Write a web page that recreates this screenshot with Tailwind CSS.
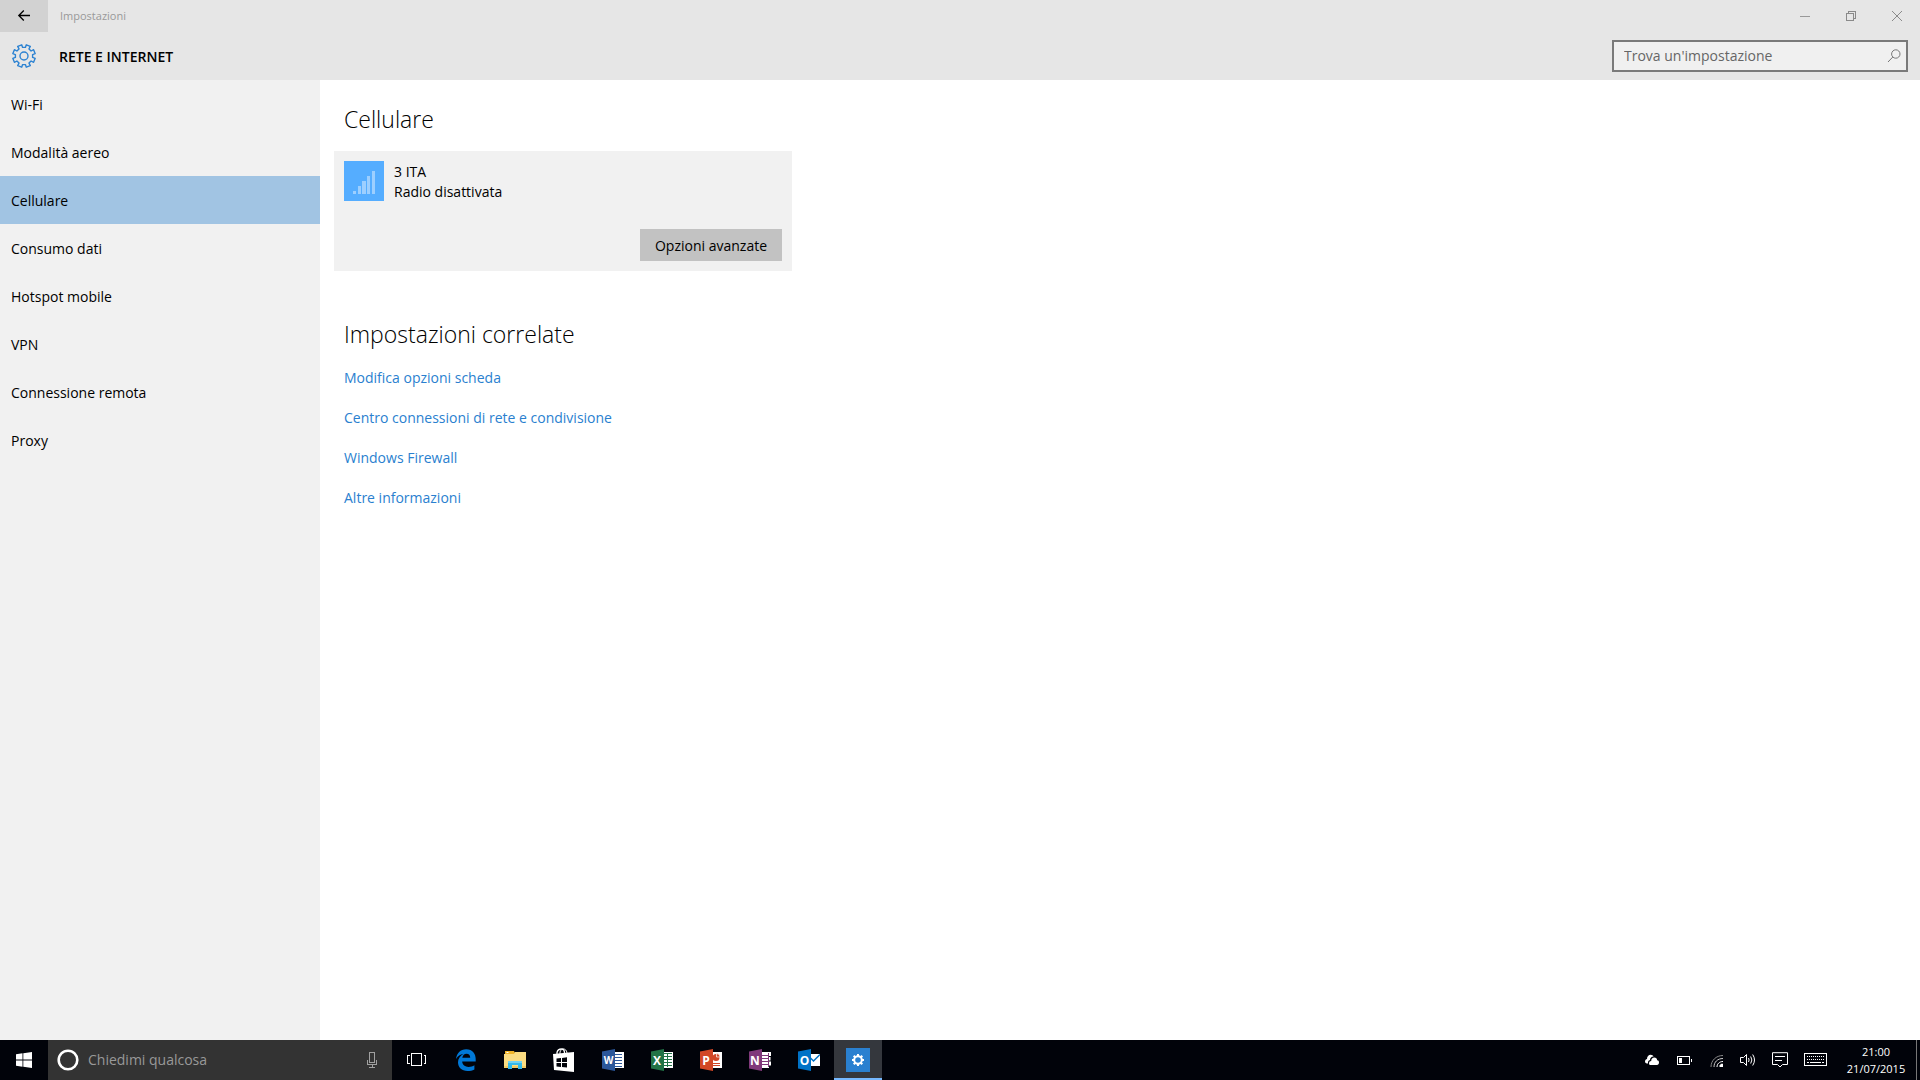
<!DOCTYPE html>
<html lang="it">
<head>
  <meta charset="UTF-8">
  <meta name="viewport" content="width=device-width, initial-scale=1.0">
  <title>Impostazioni - Rete e Internet</title>
  <script src="https://cdn.jsdelivr.net/npm/@tailwindcss/browser@4"></script>
</head>
<body class="h-screen flex flex-col overflow-hidden bg-white text-black text-sm leading-5 font-['Segoe_UI','Open_Sans','Noto_Sans',sans-serif]">

  <!-- Barra del titolo -->
  <header class="bg-[#e6e6e6] shrink-0">
    <div class="flex h-8">
      <button aria-label="Indietro" class="w-12 flex items-center justify-center bg-[#d2d2d2]">
        <svg class="w-4 h-4" viewBox="0 0 16 16" fill="none" stroke="#000" stroke-width="1.3"><path d="M14 7.5H3M7.8 2.5L2.8 7.5L7.8 12.5"/></svg>
      </button>
      <div class="pl-3 flex-1 flex items-center text-[11px] text-[#999]">Impostazioni</div>
      <button aria-label="Riduci a icona" class="w-[46px] flex items-center justify-center">
        <svg class="w-3 h-3" viewBox="0 0 12 12" shape-rendering="crispEdges"><path d="M1 6h10v1H1z" fill="#999"/></svg>
      </button>
      <button aria-label="Ripristina" class="w-[46px] flex items-center justify-center">
        <svg class="w-3 h-3" viewBox="0 0 12 12" fill="none" stroke="#8a8a8a" shape-rendering="crispEdges"><path d="M1.5 3.5h7v7h-7zM3.5 3.5v-2h7v7h-2"/></svg>
      </button>
      <button aria-label="Chiudi" class="w-[46px] flex items-center justify-center">
        <svg class="w-3 h-3" viewBox="0 0 12 12" fill="none" stroke="#8a8a8a"><path d="M1 1l10 10M11 1L1 11"/></svg>
      </button>
    </div>
    <div class="flex items-center h-12 pr-3">
      <div class="w-12 flex justify-center">
        <svg class="w-6 h-6" viewBox="-12 -12 24 24" fill="none" stroke="#2d83d2" stroke-width="1.4" stroke-linejoin="round">
          <path d="M-1.4-8.6L-2.3-11.2L-6.3-9.6L-5-7.1L-7.1-5L-9.6-6.3L-11.2-2.3L-8.6-1.4V1.4L-11.2 2.3L-9.6 6.3L-7.1 5L-5 7.1L-6.3 9.6L-2.3 11.2L-1.4 8.6H1.4L2.3 11.2L6.3 9.6L5 7.1L7.1 5L9.6 6.3L11.2 2.3L8.6 1.4V-1.4L11.2-2.3L9.6-6.3L7.1-5L5-7.1L6.3-9.6L2.3-11.2L1.4-8.6Z"/>
          <circle r="4"/>
        </svg>
      </div>
      <h1 class="flex-1 pl-[11px] pt-px font-semibold">RETE E INTERNET</h1>
      <label class="flex items-center w-[296px] h-8 border-2 border-[#7a7a7a] bg-[#f0f0f0] pl-[10px] pr-1">
        <input type="text" aria-label="Trova un'impostazione" placeholder="Trova un'impostazione" class="flex-1 min-w-0 bg-transparent outline-none placeholder:text-[#666]">
        <svg class="w-4 h-4" viewBox="0 0 16 16" fill="none" stroke="#777"><circle cx="9.800" cy="6" r="4.200"/><path d="M6.800 9L2 14"/></svg>
      </label>
    </div>
  </header>

  <div class="flex flex-1 min-h-0">
    <!-- Menu laterale -->
    <nav class="w-80 shrink-0 bg-[#f1f1f1]">
      <a href="#" class="flex items-center h-12 px-[11px] pt-[2px]">Wi-Fi</a>
      <a href="#" class="flex items-center h-12 px-[11px] pt-[2px]">Modalità aereo</a>
      <a href="#" class="flex items-center h-12 px-[11px] pt-[2px] bg-[#a1c4e3]">Cellulare</a>
      <a href="#" class="flex items-center h-12 px-[11px] pt-[2px]">Consumo dati</a>
      <a href="#" class="flex items-center h-12 px-[11px] pt-[2px]">Hotspot mobile</a>
      <a href="#" class="flex items-center h-12 px-[11px] pt-[2px]">VPN</a>
      <a href="#" class="flex items-center h-12 px-[11px] pt-[2px]">Connessione remota</a>
      <a href="#" class="flex items-center h-12 px-[11px] pt-[2px]">Proxy</a>
    </nav>

    <main class="flex-1 px-[14px] pt-[23px]">
      <h2 class="pl-[10px] text-[23px] leading-8 font-light">Cellulare</h2>
      <section class="mt-4 w-[458px] p-[10px] bg-[#f1f1f1]">
        <div class="flex gap-[10px]">
          <div class="w-10 h-10 bg-[#55adff]">
            <svg class="w-10 h-10" viewBox="0 0 40 40" fill="#9dcfff" shape-rendering="crispEdges"><path d="M9 30h3v3H9zM14 25h3v8h-3zM18 20h4v13h-4zM23 15h3v18h-3zM28 10h3v23h-3z"/></svg>
          </div>
          <div class="h-10 pt-px">
            <p>3 ITA</p>
            <p>Radio disattivata</p>
          </div>
        </div>
        <div class="flex justify-end mt-7">
          <button class="w-[142px] h-8 pt-[2px] bg-[#c2c2c2]">Opzioni avanzate</button>
        </div>
      </section>

      <h2 class="mt-[47px] pl-[10px] text-[23px] leading-8 font-light">Impostazioni correlate</h2>
      <ul class="mt-[18px] pl-[10px] flex flex-col gap-5 text-[#2a7fcf]">
        <li><a href="#">Modifica opzioni scheda</a></li>
        <li><a href="#">Centro connessioni di rete e condivisione</a></li>
        <li><a href="#">Windows Firewall</a></li>
        <li><a href="#">Altre informazioni</a></li>
      </ul>
    </main>
  </div>

  <!-- Barra delle applicazioni -->
  <footer class="flex h-10 shrink-0 bg-[#01030a] text-white">
    <button aria-label="Start" class="w-12 flex items-center justify-center">
      <svg class="w-4 h-4" viewBox="0 0 16 16" fill="#fff"><path d="M0 2.2L6.5 1.3V7.5H0zM7.3 1.2L16 0V7.5H7.3zM0 8.4H6.5V14.7L0 13.8zM7.3 8.4H16V16L7.3 14.8z"/></svg>
    </button>
    <label class="flex items-center w-[344px] bg-[#333] pl-[9px] pr-3">
      <svg class="w-[22px] h-[22px] mr-[9px]" viewBox="0 0 22 22" fill="none"><circle cx="11" cy="11" r="9.3" stroke="#fff" stroke-width="2.6"/></svg>
      <input type="text" aria-label="Chiedimi qualcosa" placeholder="Chiedimi qualcosa" class="flex-1 min-w-0 bg-transparent outline-none placeholder:text-[#999]">
      <svg class="w-4 h-4" viewBox="0 0 16 16" fill="none" stroke="#a0a0a0" shape-rendering="crispEdges"><path d="M5.5 0.5h5v10h-5zM3.5 8v4.5h9V8M8 12.5v3M5 15.5h6"/></svg>
    </label>
    <div class="flex gap-px pl-px">
      <button aria-label="Visualizzazione attività" class="w-12 flex items-center justify-center">
        <svg class="w-5 h-4" viewBox="0 0 20 16" fill="none" stroke="#fff" shape-rendering="crispEdges"><path d="M4.5 1.5h10v12h-10zM2.5 3.5h-2v8h2M16.5 3.5h2v8h-2"/></svg>
      </button>
      <button aria-label="Microsoft Edge" class="w-12 flex items-center justify-center">
        <svg class="w-[22px] h-[22px]" viewBox="0 0 22 22" fill="#0078d7"><path d="M1 9.9C1.7 4.4 5.3 0.2 11.2 0.2C17.6 0.2 20.7 4.8 20.7 10V12.6H7.2C7.3 16.2 10.3 17.9 13.5 17.9C15.9 17.9 17.8 17.3 19.4 16.3V20.4C17.4 21.4 15.1 22 12.5 22C6.7 22 3 18.5 3 13.3C3 9.5 5.2 6.5 8.3 4.9C5.2 5.2 2.7 7.1 1 9.9zM7.3 8.8H15.2C15.2 6.2 13.9 4.7 11.5 4.7C9.3 4.7 7.7 6.3 7.3 8.8z"/></svg>
      </button>
      <button aria-label="Esplora file" class="w-12 flex items-center justify-center">
        <svg class="w-[22px] h-[22px]" viewBox="0 0 22 22"><path d="M1 2h9l1 2v3H1z" fill="#f0b429"/><path d="M2.5 3h2v1h-2z" fill="#fff"/><path d="M0 5h10l1-2h11v16H0z" fill="#fbdc82"/><path d="M0 17h22v2H0z" fill="#f3cb62"/><path d="M4 12h14v8h-4v-4H8v4H4z" fill="#35b9e9"/><path d="M4 12h14v2H4z" fill="#70d2f3"/></svg>
      </button>
      <button aria-label="Store" class="w-12 flex items-center justify-center">
        <svg class="w-6 h-6" viewBox="0 0 24 24"><path d="M1 6L22 4V24L2 22z" fill="#fff"/><path d="M5 7V4.500C5.500 2 7.500 1 9.500 1S12.500 2.500 12.500 5" fill="none" stroke="#fff" stroke-width="1.300"/><path d="M8 6V4C8.500 2 10 1 11.500 1S14.500 2 15 5" fill="none" stroke="#fff"/><path d="M4.500 10.500L9 10V14H4.500zM10 9.900L15 9.300V14H10zM4.500 15H9V18.900L4.500 18.400zM10 15H15V19.600L10 19z" fill="#01030a"/></svg>
      </button>
      <button aria-label="Word" class="w-12 flex items-center justify-center">
        <svg class="w-[22px] h-[22px]" viewBox="0 0 22 22"><path d="M13 3h9v16h-9z" fill="#fff"/><path d="M13 5.500h7M13 8.500h7M13 11.500h7M13 14.500h7M13 17.500h7" stroke="#2b579a"/><path d="M0 2.500L13 0V22L0 19.500z" fill="#2b579a"/><text x="6.500" y="15" text-anchor="middle" font-size="10" font-weight="700" fill="#fff">W</text></svg>
      </button>
      <button aria-label="Excel" class="w-12 flex items-center justify-center">
        <svg class="w-[22px] h-[22px]" viewBox="0 0 22 22"><path d="M13 3h9v16h-9z" fill="#fff"/><path d="M13 4.500h8M13 7.500h8M13 10.500h8M13 13.500h8M13 16.500h8M16.500 4v14" stroke="#217346"/><path d="M0 2.500L13 0V22L0 19.500z" fill="#217346"/><text x="6" y="15.500" text-anchor="middle" font-size="12" font-weight="700" fill="#fff">X</text></svg>
      </button>
      <button aria-label="PowerPoint" class="w-12 flex items-center justify-center">
        <svg class="w-[22px] h-[22px]" viewBox="0 0 22 22"><path d="M13 3h9v16h-9z" fill="#fff"/><path d="M13 14.500h7M13 16.500h7" stroke="#d24726"/><circle cx="16" cy="8.500" r="3.500" fill="#d24726"/><path d="M16.500 8V4.500A3.500 3.500 0 0 1 20 8z" fill="#d24726" stroke="#fff" stroke-width=".7"/><path d="M0 2.500L13 0V22L0 19.500z" fill="#d24726"/><text x="6" y="15.500" text-anchor="middle" font-size="12" font-weight="700" fill="#fff">P</text></svg>
      </button>
      <button aria-label="OneNote" class="w-12 flex items-center justify-center">
        <svg class="w-[22px] h-[22px]" viewBox="0 0 22 22"><path d="M13 3h7v16h-7zM20 3h2v4h-2zM20 8h1.500v3.500H20zM20 12.500h2v4h-2z" fill="#fff"/><path d="M13 6.500h6M13 9.500h6M13 12.500h6M13 15.500h6M19.500 4v14" stroke="#80397b"/><path d="M0 2.500L13 0V22L0 19.500z" fill="#80397b"/><text x="6" y="15.500" text-anchor="middle" font-size="12" font-weight="700" fill="#fff">N</text></svg>
      </button>
      <button aria-label="Outlook" class="w-12 flex items-center justify-center">
        <svg class="w-[22px] h-[22px]" viewBox="0 0 22 22"><path d="M13 5h9v12h-9z" fill="#fff"/><path d="M12 8.500L15.500 12L22 5.500" fill="none" stroke="#0072c6" stroke-width="1.500"/><path d="M0 2.500L13 0V22L0 19.500z" fill="#0072c6"/><text x="6.500" y="15.500" text-anchor="middle" font-size="12" font-weight="700" fill="#fff">O</text></svg>
      </button>
      <button aria-label="Impostazioni" class="w-12 flex items-center justify-center bg-[#34373d] border-b-2 border-[#76b9ff] pt-[2px]">
        <svg class="w-6 h-6 bg-[#2a80d0]" viewBox="-12 -12 24 24" fill="none" stroke="#fff" stroke-width="2"><circle r="3.800"/><path d="M0-4V-6M0 4V6M-4 0H-6M4 0H6M-2.800-2.800L-4.300-4.300M2.800-2.800L4.300-4.300M-2.800 2.800L-4.300 4.300M2.800 2.800L4.300 4.300"/></svg>
      </button>
    </div>

    <!-- Area di notifica -->
    <div class="flex items-center ml-auto">
      <div class="flex items-center gap-4">
        <svg class="w-4 h-4" viewBox="0 0 16 16" fill="#fff"><path d="M1 9.500C1 8 2 7.200 3 7C3 4.500 4.500 2.800 6.700 2.800C8 2.800 9 3.500 9.600 4.500C7 4.500 6 6.500 6 8C4.500 8.300 3.800 9.500 4 11.500C2 11.500 1 11 1 9.500z"/><path d="M5 11.500C5 9.800 6 9 7.200 9C7.200 7 8.500 5.600 10.300 5.600C12 5.600 13 6.700 13.200 8.200C14.300 8.300 15 9 15 10.500C15 12 14.200 13 13 13H7C5.700 13 5 12.500 5 11.500z"/></svg>
        <svg class="w-4 h-4" viewBox="0 0 16 16" fill="none" shape-rendering="crispEdges"><path d="M1.500 4.500h12v8h-12zM15 7v3" stroke="#fff"/><path d="M3 6h3v5H3z" fill="#fff"/></svg>
        <svg class="w-4 h-4" viewBox="0 0 16 16" fill="none" stroke="#fff"><path d="M3 15C3 8.500 8 3.500 15 3.500" stroke="#888"/><path d="M6 15C6 10 9.500 6.500 15 6.500" stroke="#ccc"/><path d="M9 15C9 11.800 11.500 9.500 15 9.500"/><path d="M11.500 15V13.500L13 11.800H15V15z" fill="#fff" stroke="none"/></svg>
        <svg class="w-4 h-4" viewBox="0 0 16 16" fill="none" stroke="#fff"><path d="M.5 5.500H3.500L6.500 2.500V13.500L3.500 10.500H.5z"/><path d="M8.500 6Q9.700 8 8.500 10M10.700 4.500Q13 8 10.700 11.500M12.700 2.500Q16.300 8 12.700 13.500"/></svg>
        <svg class="w-4 h-4" viewBox="0 0 16 16" fill="none" stroke="#fff"><path d="M.5.700H15.500V12.500H10.500L8 15L5.500 12.500H.5zM3 4.500H13M3 8.500H10"/></svg>
        <svg class="w-6 h-4" viewBox="0 0 24 16" fill="none" stroke="#fff" shape-rendering="crispEdges"><path d="M.5 1.500h22v12H.5z"/><path d="M3 4.500h17M3 7.500h17" stroke-dasharray="1 1"/><path d="M3 10.500h2M6 10.500h11M18 10.500h2"/></svg>
      </div>
      <div class="ml-2 w-20 text-center text-[11px] leading-[17px]">
        <p>21:00</p>
        <p>21/07/2015</p>
      </div>
      <div class="w-1 h-full border-l border-[#777]"></div>
    </div>
  </footer>
</body>
</html>
